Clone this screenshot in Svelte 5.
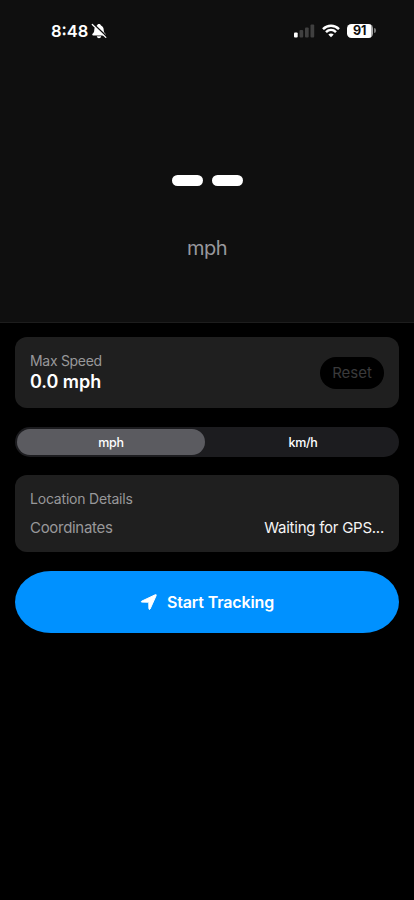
<script>
  let unit = $state('mph');
  const units = ['mph', 'km/h'];
</script>

<main>
  <header>
    <div class="status">
      <div class="clock">
        <span class="time">8:48</span>
        <svg width="16" height="16" viewBox="0 0 16 16">
          <path d="M8 1C6.900 1 6.200 1.600 6 2.500C4.200 3.200 3.400 4.800 3.300 6.700C3.200 9 2.700 9.500 1.600 10.700C0.900 11.500 1.300 12.400 2.200 12.400H13.800C14.700 12.400 15.100 11.500 14.400 10.700C13.300 9.500 12.800 9 12.700 6.700C12.600 4.800 11.800 3.200 10 2.500C9.800 1.600 9.100 1 8 1ZM5.800 13.200C6 14.500 6.900 15.200 8 15.200S10 14.500 10.200 13.200Z" fill="#fff" />
          <path d="M2.300 0.700L15.700 13.600" stroke="#0f0f0f" stroke-width="1.500" />
          <path d="M1.300 1.500L14.800 14.400" stroke="#fff" stroke-width="1.300" stroke-linecap="round" />
        </svg>
      </div>
      <div class="indicators">
        <svg width="21" height="14" viewBox="0 0 21 14">
          <rect x="0" y="8.500" width="3.700" height="5" rx="1" fill="#fff" />
          <rect x="5.500" y="6" width="3.700" height="7.500" rx="1" fill="#404040" />
          <rect x="11" y="3.500" width="3.700" height="10" rx="1" fill="#404040" />
          <rect x="16.500" y="0.500" width="3.700" height="13" rx="1" fill="#404040" />
        </svg>
        <svg class="wifi" width="18" height="14" viewBox="0 0 18 14">
          <g fill="none" stroke="#fff" stroke-width="2.500">
            <path d="M1 5.100C5.600 0.700 12.400 0.700 17 5.100" />
            <path d="M4 8.200C6.900 5.400 11.100 5.400 14 8.200" />
          </g>
          <path d="M9 13.200L6.300 10.500C7.800 9.100 10.200 9.100 11.700 10.500Z" fill="#fff" />
        </svg>
        <div class="battery"><span>91</span></div>
        <i class="cap"></i>
      </div>
    </div>
    <div class="speed" aria-label="No speed"><i></i><i></i></div>
    <div class="unit">{unit}</div>
  </header>

  <section class="card max">
    <div>
      <div class="label">Max Speed</div>
      <div class="value">0.0 {unit}</div>
    </div>
    <button class="reset" disabled>Reset</button>
  </section>

  <div class="segments">
    {#each units as u}
      <button class:selected={unit === u} onclick={() => (unit = u)}>{u}</button>
    {/each}
  </div>

  <section class="card details">
    <div class="label heading">Location Details</div>
    <div class="row"><span class="key">Coordinates</span><span class="waiting">Waiting for GPS...</span></div>
  </section>

  <button class="start">
    <svg width="18" height="18" viewBox="0 0 18 18">
      <path d="M1.600 8.200L15.200 1.800Q16.700 1.200 16.100 2.700L10.100 16Q9.200 17.200 8.900 15.600L8.800 9.600Q8.800 9.200 8.400 9.200L2 9.100Q0.500 8.900 1.600 8.200Z" fill="#fff" stroke="#fff" stroke-width="1" stroke-linejoin="round" />
    </svg>
    <span>Start Tracking</span>
  </button>
</main>

<style>
  :global(body) { background: #000; }
  main {
    box-sizing: border-box;
    height: 900px;
    display: flex;
    flex-direction: column;
    overflow: hidden;
    background: #000;
    color: #fff;
    font-family: Inter, "Liberation Sans", sans-serif;
  }
  header {
    box-sizing: border-box;
    height: 323px;
    flex: none;
    background: #0f0f0f;
    border-bottom: 1px solid #1d1d1d;
  }
  svg { display: block; flex: none; }
  button { border: 0; margin: 0; padding: 0; font-family: inherit; color: inherit; white-space: nowrap; }
  .status {
    display: flex;
    justify-content: space-between;
    align-items: center;
    height: 20px;
    padding: 20.500px 38.500px 0 51px;
  }
  .clock, .indicators { display: flex; align-items: center; }
  .clock { gap: 2.500px; }
  .time { font-size: 16.500px; font-weight: 570; letter-spacing: 0; line-height: 20px; }
  .wifi { margin-left: 6.500px; }
  .battery {
    width: 25.500px;
    height: 14px;
    margin-left: 7.500px;
    border-radius: 4.500px;
    background: linear-gradient(90deg, #fff 91%, #aaa 91%);
    color: #0f0f0f;
    font-size: 12.500px;
    font-weight: 700;
    line-height: 14px;
    text-align: center;
  }
  .cap { width: 2px; height: 5px; margin-left: 1px; border-radius: 0 2px 2px 0; background: #777; }
  .speed { display: flex; justify-content: center; gap: 9px; margin-top: 134px; }
  .speed i { width: 31px; height: 11.700px; border-radius: 6px; background: #fff; }
  .unit { margin-top: 49.300px; height: 26px; line-height: 26px; text-align: center; font-size: 20px; letter-spacing: -.5px; color: #98989d; }
  .card { box-sizing: border-box; margin: 0 15px; border-radius: 12px; background: #1f1f1f; flex: none; }
  .max {
    height: 71px;
    margin-top: 14px;
    padding: 0 15px;
    display: flex;
    align-items: center;
    justify-content: space-between;
  }
  .label { font-size: 14px; line-height: 18px; letter-spacing: -.3px; color: #98989a; }
  .heading { letter-spacing: -.2px; }
  .value { font-size: 18px; line-height: 24px; font-weight: 570; letter-spacing: -.05px; }
  .reset { width: 64px; height: 32px; border-radius: 16px; background: #000; color: #3a3a3b; font-size: 15px; }
  .segments {
    box-sizing: border-box;
    height: 30px;
    flex: none;
    margin: 19px 15px 0;
    padding: 2px;
    display: flex;
    gap: 4px;
    border-radius: 15px;
    background: #1c1c1f;
  }
  .segments button { flex: 1; border-radius: 13px; background: none; font-size: 12.500px; font-weight: 500; letter-spacing: -.35px; }
  .segments .selected { background: #5b5b60; font-weight: 550; }
  .details { height: 76.500px; margin-top: 18px; padding: 15px 15px 0; }
  .row { display: flex; justify-content: space-between; margin-top: 10px; font-size: 15px; line-height: 20px; letter-spacing: -.3px; }
  .key { color: #98989a; }
  .waiting { letter-spacing: -.25px; color: #f5f5f5; }
  .start {
    height: 62px;
    flex: none;
    margin: 19px 15px 0;
    display: flex;
    align-items: center;
    justify-content: center;
    gap: 9px;
    border-radius: 36px / 31px;
    background: #0091ff;
    font-size: 16px;
    font-weight: 570;
    letter-spacing: -.15px;
  }
</style>
